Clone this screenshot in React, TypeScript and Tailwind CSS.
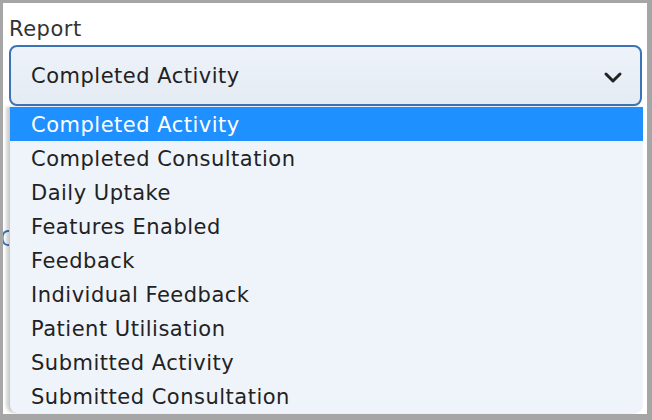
const OPTIONS = [
  "Completed Activity",
  "Completed Consultation",
  "Daily Uptake",
  "Features Enabled",
  "Feedback",
  "Individual Feedback",
  "Patient Utilisation",
  "Submitted Activity",
  "Submitted Consultation",
];

export default function App() {
  const selected = "Completed Activity";

  return (
    <div
      className="w-[652px] h-[420px] bg-[#a6a6a6] pt-[3px] pl-[3px] pr-[5px] pb-[6px] overflow-hidden tracking-[0.5px]"
      style={{ fontFamily: '"DejaVu Sans", "Liberation Sans", sans-serif' }}
    >
      <div className="relative h-full bg-white pl-[6px] pr-[5px] overflow-hidden">
        <div className="pt-[14px] text-[21px] leading-[24px] text-[#333]">Report</div>

        {/* Select */}
        <div className="mt-[4px] h-[61px] flex items-center rounded-[8px] border-2 border-[#3a74b7] bg-gradient-to-b from-[#eef3fa] to-[#e5ebf3] pl-[20px] pr-[17px] pt-[2px]">
          <span className="flex-1 text-[21px] text-[#222]">{selected}</span>
          <svg width="20" height="14" viewBox="0 0 20 14" fill="none">
            <path
              d="M3 4l7 7 7-7"
              stroke="#222"
              strokeWidth="3"
              strokeLinecap="round"
              strokeLinejoin="round"
            />
          </svg>
        </div>

        {/* Partially hidden content under the menu */}
        <div className="mt-[118px] -ml-[9px] text-[21px] text-[#3a74b7]">C</div>

        {/* Open menu */}
        <div className="absolute left-[6px] top-[104px] w-[634px] bg-[#eff4fb] rounded-b-[8px] shadow-[-3px_0_3px_rgba(0,0,0,0.18)] border-l border-[#c8c8c8] overflow-hidden">
          {OPTIONS.map((o) => (
            <div
              key={o}
              className={`h-[34px] flex items-center pl-[21px] pt-[4px] text-[21px] ${
                o === selected ? "bg-[#1e90ff] text-white" : "text-[#222]"
              }`}
            >
              {o}
            </div>
          ))}
        </div>
      </div>
    </div>
  );
}
